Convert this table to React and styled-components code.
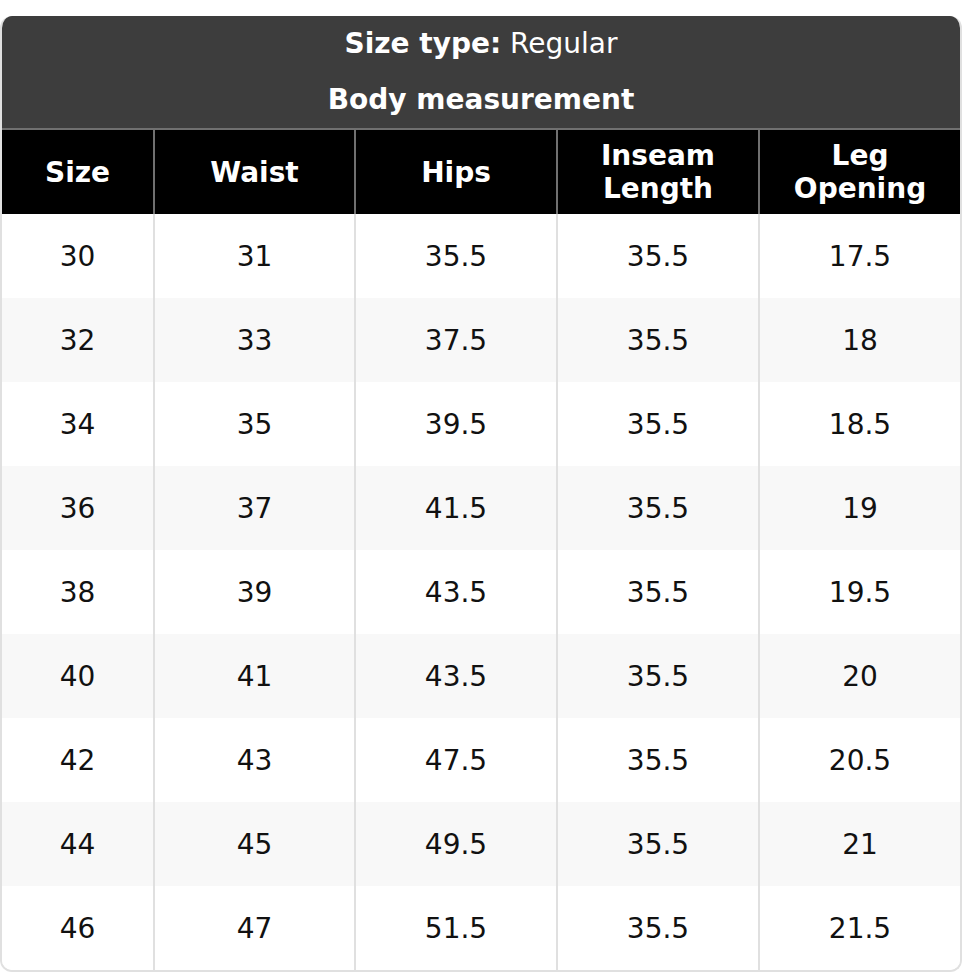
import React from 'react';
import styled, { createGlobalStyle } from 'styled-components';

const GlobalStyle = createGlobalStyle`
  body {
    margin: 0;
    background: #fff;
    font-family: "DejaVu Sans", Verdana, sans-serif;
  }
`;

const Page = styled.div`
  padding-top: 16px;
`;

const Chart = styled.div`
  border: 2px solid #e0e0e0;
  border-top: none;
  border-radius: 12px;
  overflow: hidden;
`;

const TitleBar = styled.div`
  background: #3d3d3d;
  color: #fff;
  text-align: center;
  font-size: 28px;
  border-bottom: 2px solid #707070;
  margin: 0 -2px;
`;

const TitleLine = styled.div`
  height: 56px;
  line-height: 56px;
  font-weight: ${(p) => (p.$bold ? 700 : 400)};
`;

const Table = styled.table`
  width: 100%;
  border-collapse: collapse;
  table-layout: fixed;
  font-size: 28px;
`;

const HeadCell = styled.th`
  background: #000;
  color: #fff;
  font-weight: 700;
  height: 84px;
  line-height: 33px;
  padding: 0 4px;
  text-align: center;
  border-left: 2px solid #707070;
  &:first-child {
    border-left: none;
  }
`;

const Row = styled.tr`
  background: ${(p) => (p.$alt ? '#f8f8f8' : '#fff')};
`;

const Cell = styled.td`
  height: 84px;
  padding: 0;
  text-align: center;
  color: #111;
  border-left: 2px solid #e0e0e0;
  &:first-child {
    border-left: none;
  }
`;

const rows = [
  ['30', '31', '35.5', '35.5', '17.5'],
  ['32', '33', '37.5', '35.5', '18'],
  ['34', '35', '39.5', '35.5', '18.5'],
  ['36', '37', '41.5', '35.5', '19'],
  ['38', '39', '43.5', '35.5', '19.5'],
  ['40', '41', '43.5', '35.5', '20'],
  ['42', '43', '47.5', '35.5', '20.5'],
  ['44', '45', '49.5', '35.5', '21'],
  ['46', '47', '51.5', '35.5', '21.5'],
];

export default function App() {
  return (
    <>
      <GlobalStyle />
      <Page>
        <Chart>
          <TitleBar>
            <TitleLine>
              <b>Size type:</b> Regular
            </TitleLine>
            <TitleLine $bold>Body measurement</TitleLine>
          </TitleBar>
          <Table>
            <colgroup>
              <col style={{ width: '152px' }} />
              <col style={{ width: '201px' }} />
              <col style={{ width: '202px' }} />
              <col style={{ width: '202px' }} />
              <col />
            </colgroup>
            <thead>
              <tr>
                <HeadCell>Size</HeadCell>
                <HeadCell>Waist</HeadCell>
                <HeadCell>Hips</HeadCell>
                <HeadCell>Inseam<br />Length</HeadCell>
                <HeadCell>Leg<br />Opening</HeadCell>
              </tr>
            </thead>
            <tbody>
              {rows.map((r, i) => (
                <Row key={r[0]} $alt={i % 2 === 1}>
                  {r.map((v, j) => (
                    <Cell key={j}>{v}</Cell>
                  ))}
                </Row>
              ))}
            </tbody>
          </Table>
        </Chart>
      </Page>
    </>
  );
}
